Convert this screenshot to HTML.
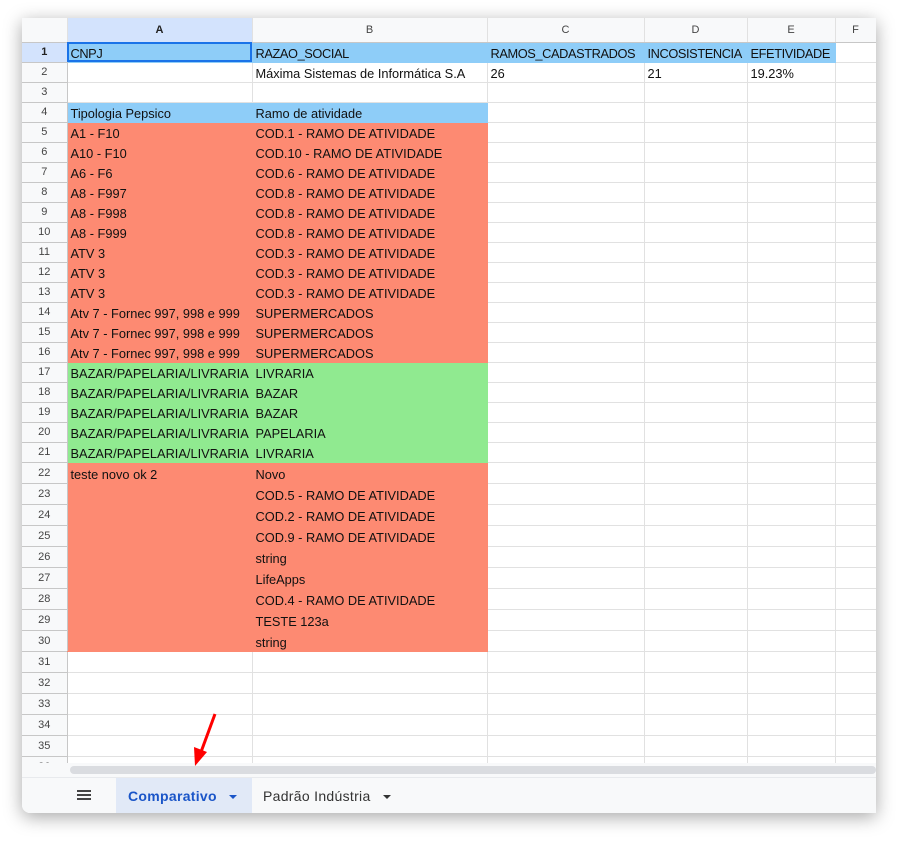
<!DOCTYPE html>
<html><head><meta charset="utf-8"><style>
*{margin:0;padding:0;box-sizing:border-box}
body{width:924px;height:862px;background:#fff;position:relative;overflow:hidden;font-family:"Liberation Sans",sans-serif}
#frame{position:absolute;left:22px;top:18px;width:854px;height:795px;background:#fff;box-shadow:0 4px 18px rgba(0,0,0,.35);border-bottom-left-radius:8px;overflow:hidden}
table{border-collapse:collapse;table-layout:fixed;position:absolute;left:0;top:0;width:854px}
td{border-right:1px solid #e1e1e1;border-bottom:1px solid #e1e1e1;font-size:12.8px;color:#111;padding:0 3px;white-space:nowrap;overflow:hidden;vertical-align:bottom;padding-bottom:1px}
td.h{background:#f8f9fa;color:#444;text-align:center;font-size:11px;border-color:#c7c7c7;padding:0;vertical-align:middle}
tr.ch td{background:#f8f9fa;color:#444;text-align:center;font-size:11px;border-bottom:1px solid #c7c7c7;vertical-align:middle;padding:0}
tr.ch td.sel{background:#d3e3fd;font-weight:bold;color:#222}
td.hs{background:#d3e3fd;font-weight:bold;color:#222}
tr.r1 td.b{letter-spacing:-0.4px}
.b{background:#8ecdf8;border-color:#8ecdf8}
.r{background:#fd8a72;border-color:#fd8a72}
.g{background:#90ea90;border-color:#90ea90}
tr{height:20px}
tr.t{height:21px}
td.top{vertical-align:top;padding-top:4px}
#sb{position:absolute;left:0;top:745px;width:854px;height:14px;background:#f8f9fa}
#thumb{position:absolute;left:48px;top:3px;width:806px;height:8px;background:#dadce0;border-radius:4px}
#tabs{position:absolute;left:0;top:759px;width:854px;height:36px;background:#f8f9fa;border-top:1px solid #e8eaed}
.tab{position:absolute;top:0;height:36px;line-height:36px;font-size:14px;letter-spacing:.3px}
.caret{display:inline-block;width:0;height:0;border-left:4px solid transparent;border-right:4px solid transparent;border-top:4px solid currentColor;vertical-align:middle;margin-left:12px}
</style></head><body>
<div id="frame">
<table>
<colgroup><col style="width:45px"><col style="width:185px"><col style="width:235px"><col style="width:157px"><col style="width:103px"><col style="width:88px"><col style="width:41px"></colgroup>
<tr class="ch" style="height:24px"><td></td><td class="sel">A</td><td>B</td><td>C</td><td>D</td><td>E</td><td>F</td></tr>
<tr class="r1"><td class="h hs">1</td><td class="b" style="outline:2px solid #1a73e8;outline-offset:-2px">CNPJ</td><td class="b">RAZAO_SOCIAL</td><td class="b">RAMOS_CADASTRADOS</td><td class="b">INCOSISTENCIA</td><td class="b">EFETIVIDADE</td><td></td></tr>
<tr><td class="h">2</td><td></td><td>Máxima Sistemas de Informática S.A</td><td>26</td><td>21</td><td>19.23%</td><td></td></tr>
<tr><td class="h">3</td><td></td><td></td><td></td><td></td><td></td><td></td></tr>
<tr><td class="h">4</td><td class="b">Tipologia Pepsico</td><td class="b">Ramo de atividade</td><td></td><td></td><td></td><td></td></tr>
<tr><td class="h">5</td><td class="r">A1 - F10</td><td class="r">COD.1 - RAMO DE ATIVIDADE</td><td></td><td></td><td></td><td></td></tr>
<tr><td class="h">6</td><td class="r">A10 - F10</td><td class="r">COD.10 - RAMO DE ATIVIDADE</td><td></td><td></td><td></td><td></td></tr>
<tr><td class="h">7</td><td class="r">A6 - F6</td><td class="r">COD.6 - RAMO DE ATIVIDADE</td><td></td><td></td><td></td><td></td></tr>
<tr><td class="h">8</td><td class="r">A8 - F997</td><td class="r">COD.8 - RAMO DE ATIVIDADE</td><td></td><td></td><td></td><td></td></tr>
<tr><td class="h">9</td><td class="r">A8 - F998</td><td class="r">COD.8 - RAMO DE ATIVIDADE</td><td></td><td></td><td></td><td></td></tr>
<tr><td class="h">10</td><td class="r">A8 - F999</td><td class="r">COD.8 - RAMO DE ATIVIDADE</td><td></td><td></td><td></td><td></td></tr>
<tr><td class="h">11</td><td class="r">ATV 3</td><td class="r">COD.3 - RAMO DE ATIVIDADE</td><td></td><td></td><td></td><td></td></tr>
<tr><td class="h">12</td><td class="r">ATV 3</td><td class="r">COD.3 - RAMO DE ATIVIDADE</td><td></td><td></td><td></td><td></td></tr>
<tr><td class="h">13</td><td class="r">ATV 3</td><td class="r">COD.3 - RAMO DE ATIVIDADE</td><td></td><td></td><td></td><td></td></tr>
<tr><td class="h">14</td><td class="r">Atv 7 - Fornec 997, 998 e 999</td><td class="r">SUPERMERCADOS</td><td></td><td></td><td></td><td></td></tr>
<tr><td class="h">15</td><td class="r">Atv 7 - Fornec 997, 998 e 999</td><td class="r">SUPERMERCADOS</td><td></td><td></td><td></td><td></td></tr>
<tr><td class="h">16</td><td class="r">Atv 7 - Fornec 997, 998 e 999</td><td class="r">SUPERMERCADOS</td><td></td><td></td><td></td><td></td></tr>
<tr><td class="h">17</td><td class="g">BAZAR/PAPELARIA/LIVRARIA</td><td class="g">LIVRARIA</td><td></td><td></td><td></td><td></td></tr>
<tr><td class="h">18</td><td class="g">BAZAR/PAPELARIA/LIVRARIA</td><td class="g">BAZAR</td><td></td><td></td><td></td><td></td></tr>
<tr><td class="h">19</td><td class="g">BAZAR/PAPELARIA/LIVRARIA</td><td class="g">BAZAR</td><td></td><td></td><td></td><td></td></tr>
<tr><td class="h">20</td><td class="g">BAZAR/PAPELARIA/LIVRARIA</td><td class="g">PAPELARIA</td><td></td><td></td><td></td><td></td></tr>
<tr><td class="h">21</td><td class="g">BAZAR/PAPELARIA/LIVRARIA</td><td class="g">LIVRARIA</td><td></td><td></td><td></td><td></td></tr>
<tr class="t"><td class="h">22</td><td class="r top" rowspan="9">teste novo ok 2</td><td class="r">Novo</td><td></td><td></td><td></td><td></td></tr>
<tr class="t"><td class="h">23</td><td class="r">COD.5 - RAMO DE ATIVIDADE</td><td></td><td></td><td></td><td></td></tr>
<tr class="t"><td class="h">24</td><td class="r">COD.2 - RAMO DE ATIVIDADE</td><td></td><td></td><td></td><td></td></tr>
<tr class="t"><td class="h">25</td><td class="r">COD.9 - RAMO DE ATIVIDADE</td><td></td><td></td><td></td><td></td></tr>
<tr class="t"><td class="h">26</td><td class="r">string</td><td></td><td></td><td></td><td></td></tr>
<tr class="t"><td class="h">27</td><td class="r">LifeApps</td><td></td><td></td><td></td><td></td></tr>
<tr class="t"><td class="h">28</td><td class="r">COD.4 - RAMO DE ATIVIDADE</td><td></td><td></td><td></td><td></td></tr>
<tr class="t"><td class="h">29</td><td class="r">TESTE 123a</td><td></td><td></td><td></td><td></td></tr>
<tr class="t"><td class="h">30</td><td class="r">string</td><td></td><td></td><td></td><td></td></tr>
<tr class="t"><td class="h">31</td><td></td><td></td><td></td><td></td><td></td><td></td></tr>
<tr class="t"><td class="h">32</td><td></td><td></td><td></td><td></td><td></td><td></td></tr>
<tr class="t"><td class="h">33</td><td></td><td></td><td></td><td></td><td></td><td></td></tr>
<tr class="t"><td class="h">34</td><td></td><td></td><td></td><td></td><td></td><td></td></tr>
<tr class="t"><td class="h">35</td><td></td><td></td><td></td><td></td><td></td><td></td></tr>
<tr class="t"><td class="h">36</td><td></td><td></td><td></td><td></td><td></td><td></td></tr>
</table>
<div id="sb"><div id="thumb"></div></div>
<div id="tabs">
<div style="position:absolute;left:55px;top:12px;width:14px;height:2px;background:#444;box-shadow:0 4px 0 #444,0 8px 0 #444"></div>
<div class="tab" style="left:94px;width:136px;background:#e1e9f7;color:#1a55c8;font-weight:bold;padding-left:12px">Comparativo<span class="caret"></span></div>
<div class="tab" style="left:241px;color:#333">Padrão Indústria<span class="caret"></span></div>
</div>
</div>
<svg style="position:absolute;left:0;top:0" width="924" height="862"><line x1="215" y1="714" x2="201" y2="752" stroke="#f00" stroke-width="3"/><polygon points="195,766 194,747 207,752" fill="#f00"/></svg>
</body></html>
